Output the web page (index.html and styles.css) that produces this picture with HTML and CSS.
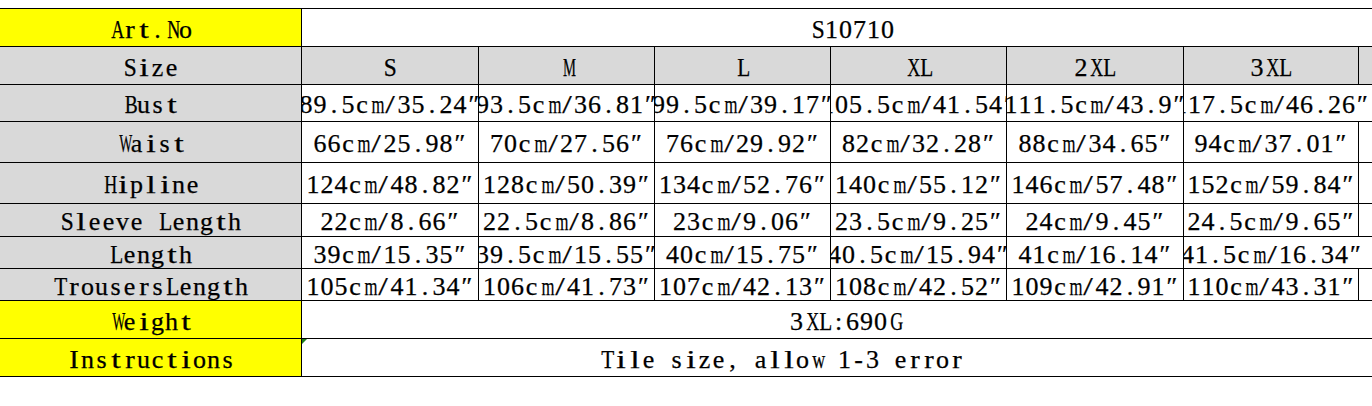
FILE: index.html
```html
<!DOCTYPE html>
<html>
<head>
<meta charset="utf-8">
<link rel="stylesheet" href="styles.css">
</head>
<body>
<div class="sheet">
  <div class="c head yellow"><span class="t">Art.No</span></div>
  <div class="c merged art"><span class="t">S10710</span></div>

  <div class="c head gray"><span class="t">Size</span></div>
  <div class="c gray"><span class="t">S</span></div>
  <div class="c gray"><span class="t">M</span></div>
  <div class="c gray"><span class="t">L</span></div>
  <div class="c gray"><span class="t">XL</span></div>
  <div class="c gray"><span class="t">2XL</span></div>
  <div class="c gray"><span class="t">3XL</span></div>
  <div class="c gray extra"></div>

  <div class="c head gray"><span class="t">Bust</span></div>
  <div class="c"><span class="t">89.5cm/35.24″</span></div>
  <div class="c"><span class="t">93.5cm/36.81″</span></div>
  <div class="c"><span class="t">99.5cm/39.17″</span></div>
  <div class="c"><span class="t">105.5cm/41.54″</span></div>
  <div class="c"><span class="t">111.5cm/43.9″</span></div>
  <div class="c spill"><span class="t">117.5cm/46.26″</span></div>
  <div class="c extra clear"></div>

  <div class="c head gray"><span class="t">Waist</span></div>
  <div class="c"><span class="t">66cm/25.98″</span></div>
  <div class="c"><span class="t">70cm/27.56″</span></div>
  <div class="c"><span class="t">76cm/29.92″</span></div>
  <div class="c"><span class="t">82cm/32.28″</span></div>
  <div class="c"><span class="t">88cm/34.65″</span></div>
  <div class="c"><span class="t">94cm/37.01″</span></div>
  <div class="c extra"></div>

  <div class="c head gray"><span class="t">Hipline</span></div>
  <div class="c"><span class="t">124cm/48.82″</span></div>
  <div class="c"><span class="t">128cm/50.39″</span></div>
  <div class="c"><span class="t">134cm/52.76″</span></div>
  <div class="c"><span class="t">140cm/55.12″</span></div>
  <div class="c"><span class="t">146cm/57.48″</span></div>
  <div class="c"><span class="t">152cm/59.84″</span></div>
  <div class="c extra"></div>

  <div class="c head gray"><span class="t">Sleeve Length</span></div>
  <div class="c"><span class="t">22cm/8.66″</span></div>
  <div class="c"><span class="t">22.5cm/8.86″</span></div>
  <div class="c"><span class="t">23cm/9.06″</span></div>
  <div class="c"><span class="t">23.5cm/9.25″</span></div>
  <div class="c"><span class="t">24cm/9.45″</span></div>
  <div class="c"><span class="t">24.5cm/9.65″</span></div>
  <div class="c extra"></div>

  <div class="c head gray"><span class="t">Length</span></div>
  <div class="c"><span class="t">39cm/15.35″</span></div>
  <div class="c"><span class="t">39.5cm/15.55″</span></div>
  <div class="c"><span class="t">40cm/15.75″</span></div>
  <div class="c"><span class="t">40.5cm/15.94″</span></div>
  <div class="c"><span class="t">41cm/16.14″</span></div>
  <div class="c spill"><span class="t">41.5cm/16.34″</span></div>
  <div class="c extra clear"></div>

  <div class="c head gray"><span class="t">TrousersLength</span></div>
  <div class="c"><span class="t">105cm/41.34″</span></div>
  <div class="c"><span class="t">106cm/41.73″</span></div>
  <div class="c"><span class="t">107cm/42.13″</span></div>
  <div class="c"><span class="t">108cm/42.52″</span></div>
  <div class="c"><span class="t">109cm/42.91″</span></div>
  <div class="c"><span class="t">110cm/43.31″</span></div>
  <div class="c extra"></div>

  <div class="c head yellow"><span class="t">Weight</span></div>
  <div class="c merged weight"><span class="t">3XL:690G</span></div>

  <div class="c head yellow"><span class="t">Instructions</span></div>
  <div class="c merged instr"><i class="flag"></i><span class="t">Tile size, allow 1-3 error</span></div>
</div>
<script src="script.js"></script>
</body>
</html>
```

FILE: styles.css
```css
html, body {
  margin: 0;
  padding: 0;
  background: #fff;
  overflow: hidden;
}

body {
  width: 1372px;
  height: 406px;
}

.sheet {
  margin-top: 8px;
  width: 1420px;
  display: grid;
  grid-template-columns: 302px 177px 176px 176px 176px 177px 175px 61px;
  grid-template-rows: 38px 38px 37px 41px 41px 33px 32px 32px 38px 38px;
  border-top: 1px solid #000;
  font-family: "Liberation Serif", "DejaVu Serif", serif;
  font-size: 26px;
  color: #000;
  -webkit-text-stroke: 0.25px #000;
}

.c {
  box-sizing: border-box;
  border-right: 1px solid #000;
  border-bottom: 1px solid #000;
  display: flex;
  justify-content: center;
  align-items: center;
  overflow: hidden;
  white-space: nowrap;
  background: #fff;
  padding-top: 4px;
  position: relative;
}

.t {
  display: flex;
  flex: none;
  line-height: 1;
}

.ch {
  display: inline-block;
  flex: none;
  width: 14px;
  text-align: center;
}

.gray { background: #d9d9d9; }
.yellow { background: #ffff00; }

.merged {
  grid-column: 2 / span 7;
}

.art { padding-right: 16px; }
.weight { padding-right: 30px; }
.instr { padding-right: 158px; }

.spill {
  border-right: none;
  overflow: visible;
  clip-path: inset(0 -30px 0 0);
}

.clear { background: transparent; }

.flag {
  position: absolute;
  left: 0;
  top: 0;
  width: 0;
  height: 0;
  border-top: 5px solid #1d7a1d;
  border-right: 5px solid transparent;
}
```

FILE: script.js
```js
(function () {
  var canvas = document.createElement('canvas');
  var ctx = canvas.getContext('2d');
  ctx.font = '26px "Liberation Serif"';
  var fit = 13;
  var narrow = 9.5;
  document.querySelectorAll('.t').forEach(function (el) {
    var text = el.textContent;
    el.textContent = '';
    Array.from(text).forEach(function (ch) {
      var b = document.createElement('span');
      b.className = 'ch';
      b.textContent = ch === ' ' ? '\u00a0' : ch;
      var w = ctx.measureText(ch).width;
      var s = 1;
      if (w > fit) {
        s = fit / w;
      } else if (/[A-Za-z\/]/.test(ch) && w < narrow) {
        s = Math.min(1.35, narrow / w);
      }
      if (s !== 1) {
        b.style.transform = 'scaleX(' + s.toFixed(3) + ')';
      }
      el.appendChild(b);
    });
  });
})();
```
